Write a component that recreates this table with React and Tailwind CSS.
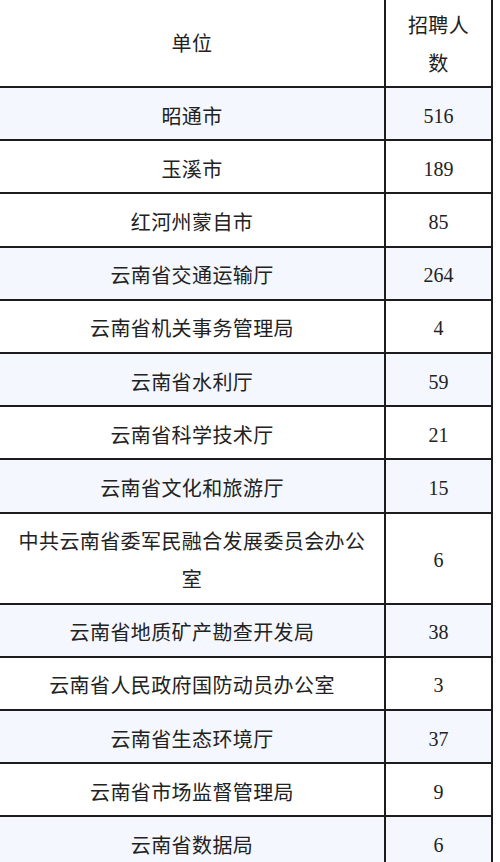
const rows = [
  { name: '昭通市', num: 516, tint: true },
  { name: '玉溪市', num: 189 },
  { name: '红河州蒙自市', num: 85 },
  { name: '云南省交通运输厅', num: 264, tint: true },
  { name: '云南省机关事务管理局', num: 4 },
  { name: '云南省水利厅', num: 59, tint: true },
  { name: '云南省科学技术厅', num: 21 },
  { name: '云南省文化和旅游厅', num: 15, tint: true },
  { name: '中共云南省委军民融合发展委员会办公室', num: 6 },
  { name: '云南省地质矿产勘查开发局', num: 38, tint: true },
  { name: '云南省人民政府国防动员办公室', num: 3 },
  { name: '云南省生态环境厅', num: 37, tint: true },
  { name: '云南省市场监督管理局', num: 9 },
  { name: '云南省数据局', num: 6, tint: true },
]

const cjk = "font-['Noto_Sans_CJK_SC','Noto_Sans',sans-serif]"
const serif = "font-['Liberation_Serif','Noto_Sans_CJK_SC',serif]"

function Row({ name, num, tint }) {
  return (
    <div className={`flex w-[493px] border-b-2 border-r-2 border-[#1c1c1c] ${tint ? 'bg-[#f4f7fd]' : 'bg-white'}`}>
      <div className={`w-[386px] shrink-0 border-r-2 border-[#1c1c1c] px-4 pt-[8.6px] pb-[4.6px] flex items-center justify-center text-center text-[20px] leading-[38px] tracking-[0.4px] text-[#222] ${cjk}`}>
        {name}
      </div>
      <div className={`flex-1 px-4 pt-[8.6px] pb-[4.6px] flex items-center justify-center text-[20px] leading-[38px] text-[#222] ${serif}`}>
        {num}
      </div>
    </div>
  )
}

export default function App() {
  return (
    <div className="w-[500px] h-[862px] overflow-hidden bg-white">
      <div className="flex w-[493px] border-b-2 border-r-2 border-[#1c1c1c] bg-white">
        <div className={`w-[386px] shrink-0 border-r-2 border-[#1c1c1c] px-4 flex items-center justify-center text-[20px] leading-[38px] tracking-[0.4px] text-[#222] ${cjk}`}>
          单位
        </div>
        <div className={`flex-1 px-4 pt-[6px] pb-[4px] text-center text-[20px] leading-[38px] tracking-[0.4px] text-[#222] ${cjk}`}>
          招聘人数
        </div>
      </div>
      {rows.map(r => <Row key={r.name} {...r} />)}
    </div>
  )
}
